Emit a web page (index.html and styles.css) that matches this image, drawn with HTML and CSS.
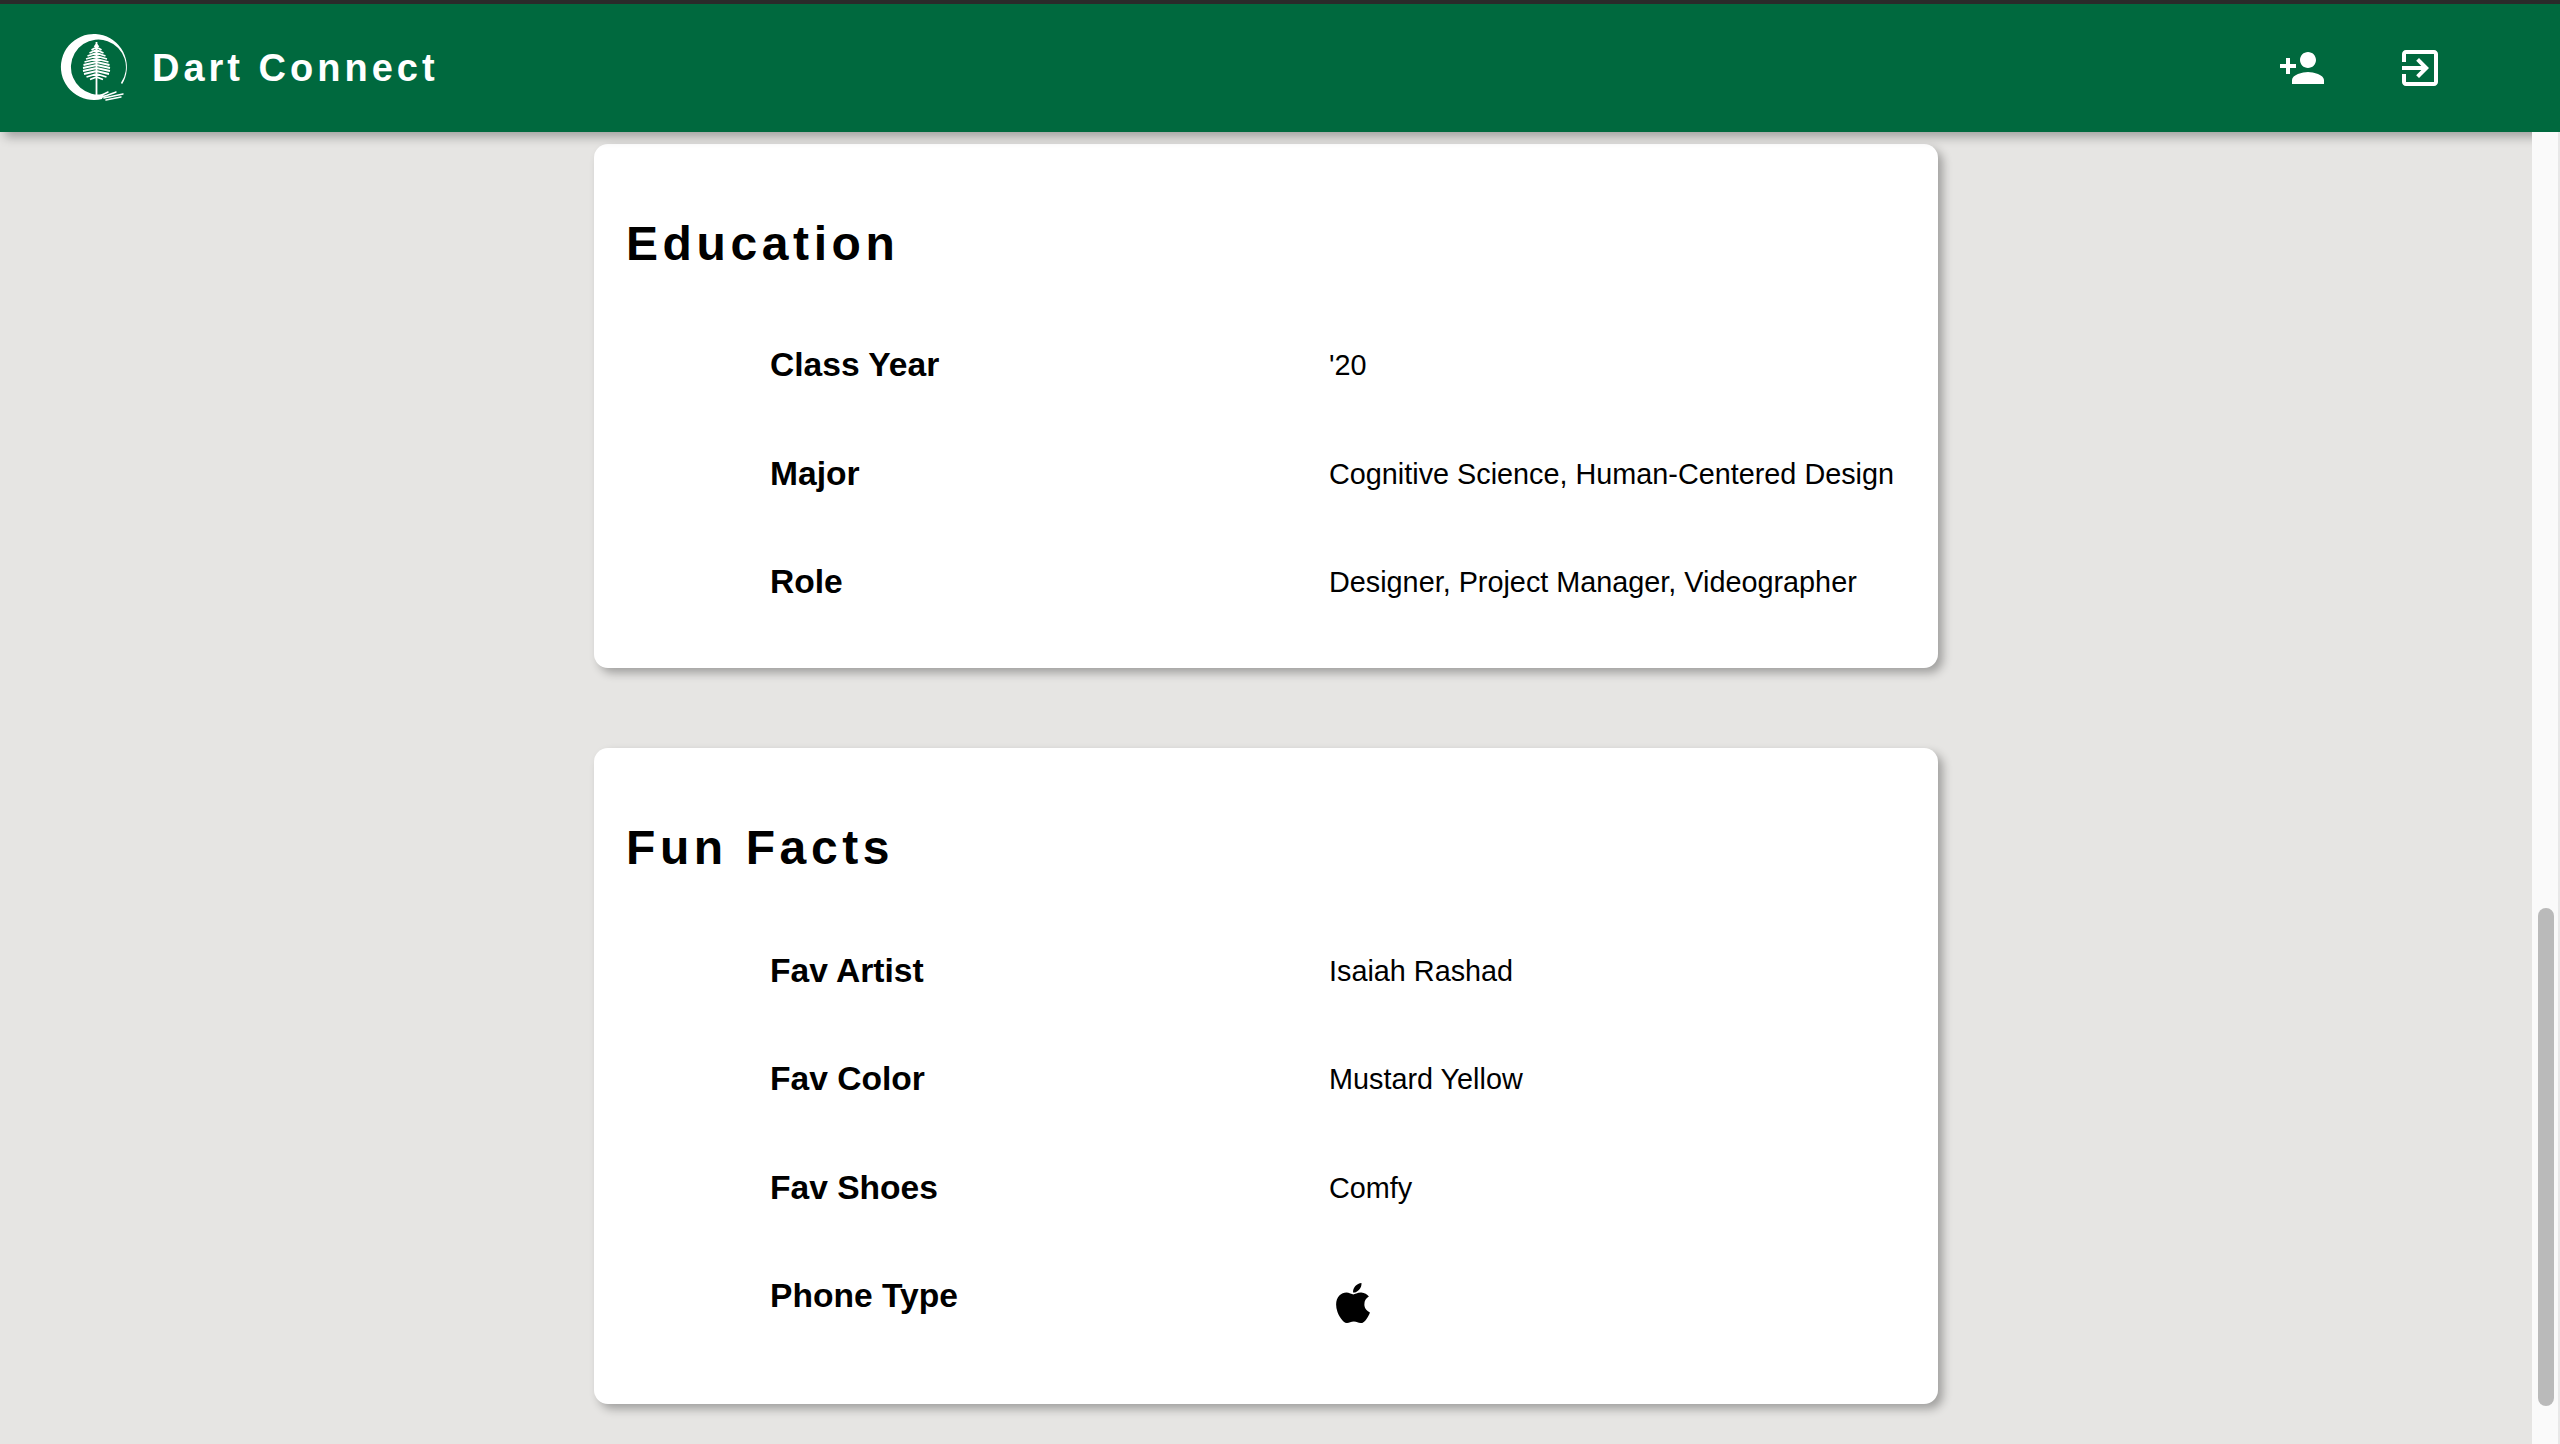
FILE: index.html
```html
<!DOCTYPE html>
<html lang="en">
<head>
    <meta charset="UTF-8">
    <meta name="viewport" content="width=device-width, initial-scale=1.0">
    <title>Dart Connect</title>
    <link rel="stylesheet" href="styles.css">
</head>
<body>
    <header class="navbar">
        <div class="brand">
            <svg class="brand-logo" viewBox="0 0 72 72" aria-hidden="true">
                <path class="logo-ring" d="M64 52.3A33 33 0 1 0 44 67L46 62A27.5 27.5 0 1 1 63 50.8Z"/>
                <path class="logo-tree" d="M38.5 10V64M36.5 15L38.5 12L40.5 15M33.5 18L38.5 15L43.5 18M31.5 21L38.5 18L45.5 21M29.5 24L38.5 21L47.5 24M28 27L38.5 24L49 27M26.5 30L38.5 27L50.5 30M25.5 33L38.5 30L51.5 33M25 36L38.5 33L52 36M25 39L38.5 36L52 39M26 42L38.5 39L51 42M28.5 45L38.5 42L48.5 45M32 47.5L38.5 45L45 47.5"/>
                <path class="logo-hand" d="M30 63C36 67 42 64 50 60M36 66C44 66 50 63 58 60M46 66L65 62M48 68L63 65"/>
            </svg>
            <span class="brand-name">Dart Connect</span>
        </div>
        <nav class="nav-icons">
            <svg class="nav-icon" viewBox="0 0 24 24" aria-hidden="true">
                <path d="M15 12c2.21 0 4-1.79 4-4s-1.79-4-4-4-4 1.79-4 4 1.79 4 4 4zm-9-2V7H4v3H1v2h3v3h2v-3h3v-2H6zm9 4c-2.67 0-8 1.34-8 4v2h16v-2c0-2.66-5.33-4-8-4z"/>
            </svg>
            <svg class="nav-icon" viewBox="0 0 24 24" aria-hidden="true">
                <path d="M10.09 15.59L11.5 17l5-5-5-5-1.41 1.41L12.67 11H3v2h9.67l-2.58 2.59zM19 3H5c-1.11 0-2 .9-2 2v4h2V5h14v14H5v-4H3v4c0 1.1.89 2 2 2h14c1.1 0 2-.9 2-2V5c0-1.1-.9-2-2-2z"/>
            </svg>
        </nav>
    </header>

    <div class="page">
        <main class="content">
            <section class="card">
                <h2>Education</h2>
                <div class="row"><span class="label">Class Year</span><span class="value">'20</span></div>
                <div class="row"><span class="label">Major</span><span class="value">Cognitive Science, Human-Centered Design</span></div>
                <div class="row"><span class="label">Role</span><span class="value">Designer, Project Manager, Videographer</span></div>
            </section>

            <section class="card card-facts">
                <h2>Fun Facts</h2>
                <div class="row"><span class="label">Fav Artist</span><span class="value">Isaiah Rashad</span></div>
                <div class="row"><span class="label">Fav Color</span><span class="value">Mustard Yellow</span></div>
                <div class="row"><span class="label">Fav Shoes</span><span class="value">Comfy</span></div>
                <div class="row">
                    <span class="label">Phone Type</span>
                    <svg class="apple-icon" viewBox="0 0 384 512" aria-hidden="true">
                        <path d="M318.7 268.7c-.2-36.7 16.4-64.4 50-84.8-18.8-26.9-47.2-41.7-84.7-44.6-35.5-2.8-74.3 20.7-88.5 20.7-15 0-49.4-19.7-76.4-19.7C63.3 141.2 4 184.8 4 273.5q0 39.3 14.4 81.2c12.8 36.7 59 126.7 107.2 125.2 25.2-.6 43-17.9 75.8-17.9 31.8 0 48.3 17.9 76.4 17.9 48.6-.7 90.4-82.5 102.6-119.3-65.2-30.7-61.7-90-61.7-91.9zm-56.6-164.2c27.3-32.4 24.8-61.9 24-72.5-24.1 1.4-52 16.4-67.9 34.9-17.5 19.8-27.8 44.3-25.6 71.9 26.1 2 49.9-11.4 69.5-34.3z"/>
                    </svg>
                </div>
            </section>
        </main>
        <div class="scrollbar"><div class="scrollbar-thumb"></div></div>
    </div>
</body>
</html>
```

FILE: styles.css
```css
* {
    box-sizing: border-box;
}
html, body {
    height: 100%;
}
body {
    margin: 0;
    display: flex;
    flex-direction: column;
    overflow: hidden;
    font-family: "Liberation Sans", Arial, sans-serif;
    background-color: #e6e5e3;
    color: #000;
}
.navbar {
    position: relative;
    z-index: 1;
    flex: none;
    height: 132px;
    display: flex;
    align-items: center;
    justify-content: space-between;
    padding: 0 116px 0 58px;
    background-color: #00693e;
    border-top: 4px solid #2a2a2a;
    box-shadow: 5px 5px 10px rgba(0, 0, 0, 0.3);
}
.brand {
    display: flex;
    align-items: center;
    gap: 22px;
}
.brand-logo {
    width: 72px;
    height: 72px;
}
.logo-ring {
    fill: #fff;
}
.logo-tree, .logo-hand {
    fill: none;
    stroke: #fff;
}
.logo-tree {
    stroke-width: 1.8;
}
.logo-hand {
    stroke-width: 1.5;
    stroke-linecap: round;
}
.brand-name {
    font-size: 38px;
    font-weight: bold;
    letter-spacing: 4px;
    color: #fff;
}
.nav-icons {
    display: flex;
    gap: 70px;
}
.nav-icon {
    width: 48px;
    height: 48px;
    fill: #fff;
}
.page {
    flex: 1;
    min-height: 0;
    display: flex;
}
.content {
    flex: 1;
    display: flex;
    flex-direction: column;
    align-items: center;
    gap: 80px;
    padding-top: 12px;
}
.card {
    width: 1344px;
    padding: 72px 32px 31px;
    background-color: #fff;
    border-radius: 14px;
    box-shadow: 5px 5px 10px rgba(0, 0, 0, 0.3);
}
.card h2 {
    margin: 0 0 40px;
    font-size: 48px;
    line-height: 55px;
    letter-spacing: 4.6px;
}
.card-facts h2 {
    margin-bottom: 42px;
}
.row {
    display: grid;
    grid-template-columns: 559px 1fr;
    align-items: start;
    padding: 34.25px 0 34.25px 144px;
    line-height: 40px;
}
.label {
    font-size: 33.6px;
    font-weight: bold;
}
.value {
    font-size: 28.8px;
}
.apple-icon {
    width: 36px;
    height: 46px;
    margin: 4px 0 12px 6px;
}
.scrollbar {
    position: relative;
    z-index: 2;
    flex: none;
    width: 28px;
    padding: 776px 6px 0 6px;
    background-color: #fafafa;
    border-right: 2px solid #e8e8e8;
}
.scrollbar-thumb {
    width: 16px;
    height: 498px;
    border-radius: 8px;
    background-color: #bababa;
}
```
